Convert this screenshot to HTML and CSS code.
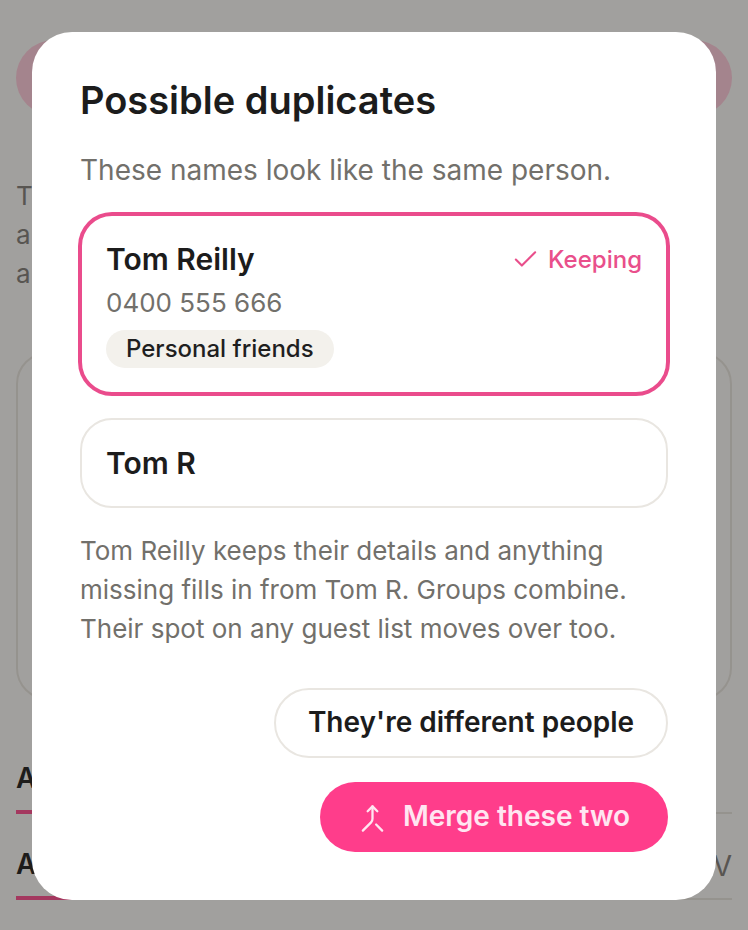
FILE: index.html
```html
<!DOCTYPE html>
<html lang="en">
<head>
<meta charset="utf-8">
<title>Possible duplicates</title>
<link rel="stylesheet" href="styles.css">
</head>
<body>
<div class="page">
  <div class="hero"></div>
  <p class="intro">T<br>a<br>a</p>
  <div class="panel"></div>
  <div class="row first"><span class="tab">A</span></div>
  <div class="row second"><span class="tab">A</span><span class="view">V</span></div>
</div>
<div class="overlay">
  <section class="modal">
    <h1 class="title">Possible duplicates</h1>
    <p class="sub">These names look like the same person.</p>
    <div class="card keep">
      <div class="card-top">
        <span class="name">Tom Reilly</span>
        <span class="keeping">
          <svg class="check" viewBox="0 0 24 24" fill="none" stroke="currentColor" stroke-width="1.750" stroke-linecap="round" stroke-linejoin="round"><path d="M20 6 9 17l-5-5"/></svg>
          Keeping
        </span>
      </div>
      <div class="phone">0400 555 666</div>
      <span class="chip">Personal friends</span>
    </div>
    <div class="card plain"><span class="name">Tom R</span></div>
    <p class="note">Tom Reilly keeps their details and anything missing fills in from Tom R. Groups combine. Their spot on any guest list moves over too.</p>
    <div class="actions">
      <button class="btn ghost">They're different people</button>
      <button class="btn primary">
        <svg class="merge" viewBox="0 0 24 24" fill="none" stroke="currentColor" stroke-width="1.900" stroke-linecap="round" stroke-linejoin="round"><path d="m8 6 4-4 4 4"/><path d="M12 2v10.300a4 4 0 0 1-1.172 2.872L4 22"/><path d="m20 22-5-5"/></svg>
        Merge these two
      </button>
    </div>
  </section>
</div>
</body>
</html>
```
FILE: styles.css
```css
* { box-sizing: border-box; }
html, body { margin: 0; height: 930px; overflow: hidden; }
body { font-family: Inter, "Liberation Sans", sans-serif; background: #fbfaf8; color: #1f1f1f; }

.page { padding: 40px 16px 0; height: 930px; }
.hero { height: 76px; border-radius: 38px; background: #ffcbdc; }
.intro { margin: 60px 0 0; font-size: 26px; line-height: 39px; color: #807d78; }
.panel { margin-top: 59px; height: 348px; border: 2px solid #e7e4de; border-radius: 32px; }
.row { display: flex; justify-content: space-between; align-items: flex-end; border-bottom: 2px solid #e7e4de; font-size: 28px; font-weight: 600; }
.first { height: 114px; }
.second { height: 86px; }
.tab { width: 60px; line-height: 34px; margin-bottom: -2px; padding-bottom: 15px; border-bottom: 4px solid #ff4d8f; }
.view { line-height: 34px; padding-bottom: 15px; font-weight: 400; color: #807d78; }

.overlay { position: fixed; inset: 0; background: rgba(28,25,23,.4); }
.modal { position: absolute; left: 32px; top: 32px; width: 684px; height: 868px; background: #fff; border-radius: 40px; padding: 47px 48px 48px; }
.title { margin: 0; font-size: 38px; line-height: 42px; font-weight: 600; color: #1c1c1c; }
.sub { margin: 29px 0 0; font-size: 28px; line-height: 40px; color: #72706b; }

.card { width: 588px; border-radius: 32px; background: #fff; }
.keep { margin-top: 24px; height: 180px; border: 2px solid #ea4c8c; box-shadow: 0 0 0 2px #ea4c8c; padding: 23px 24px 0; }
.plain { margin-top: 24px; height: 90px; border: 2px solid #e9e6e1; padding: 0 24px; display: flex; align-items: center; }
.card-top { display: flex; justify-content: space-between; align-items: center; height: 40px; }
.name { font-size: 30px; font-weight: 600; color: #1c1c1c; }
.keeping { display: flex; align-items: center; gap: 8px; font-size: 24px; font-weight: 500; color: #e94f8b; }
.check { width: 29px; height: 29px; }
.phone { margin-top: 4px; font-size: 26px; line-height: 40px; color: #72706b; }
.chip { display: inline-block; margin-top: 7px; padding: 0 20px; height: 38px; line-height: 38px; border-radius: 19px; background: #f3f1ec; font-size: 24px; font-weight: 500; color: #1f1f1f; }

.note { margin: 23px 0 0; width: 560px; font-size: 26px; line-height: 39px; color: #72706b; }
.actions { margin-top: 40px; display: flex; flex-direction: column; align-items: flex-end; gap: 24px; width: 588px; }
.btn { font-family: inherit; display: flex; align-items: center; justify-content: center; height: 70px; border-radius: 35px; font-size: 28px; font-weight: 600; }
.ghost { width: 394px; padding: 0 0 2px; background: #fff; border: 2px solid #e9e6e1; color: #1c1c1c; }
.primary { width: 348px; padding: 0 0 2px; background: #ff3d8b; border: 0; color: #ffe6f1; gap: 16px; }
.merge { width: 29px; height: 29px; margin-top: 4px; }
```
